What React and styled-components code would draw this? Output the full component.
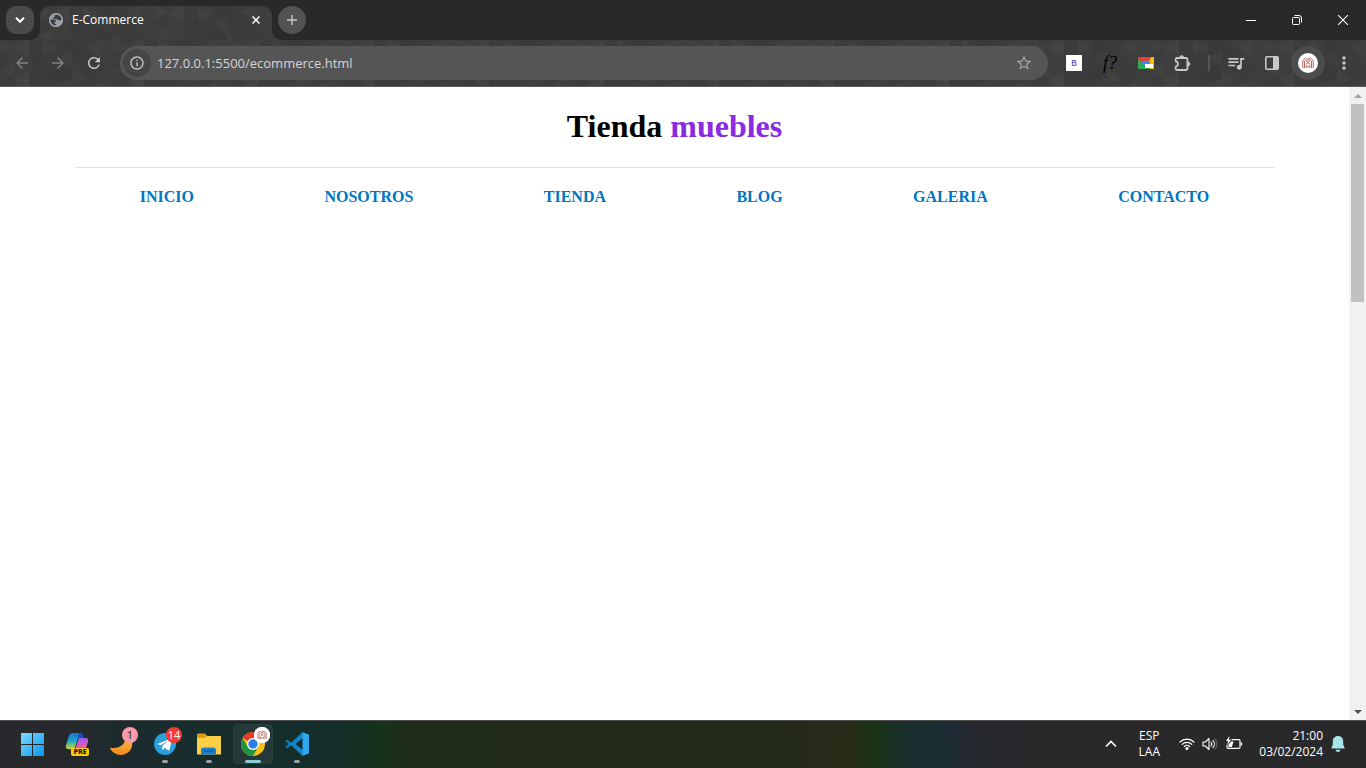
import styled, { createGlobalStyle, css } from "styled-components";
import {
    MdArrowBack,
    MdArrowForward,
    MdRefresh,
    MdStarBorder,
    MdInfoOutline,
    MdQueueMusic,
    MdMoreVert,
} from "react-icons/md";

const GlobalStyle = createGlobalStyle`
    :root {
        --strip-bg: #292929;
        --toolbar-bg: #3c3c3c;
        --pill-bg: #555555;
        --icon-color: #c7c7c7;
        --link-color: #0077c0;
        --brand-color: #8a2be2;
        --ui-font: "Open Sans", "Noto Sans", sans-serif;
    }

    *,
    *::before,
    *::after {
        box-sizing: border-box;
    }

    body {
        margin: 0;
        background-color: #ffffff;
    }

    button {
        padding: 0;
        border: none;
        background: none;
        color: inherit;
        font: inherit;
    }
`;

const Screen = styled.div`
    display: flex;
    flex-direction: column;
    min-height: 100vh;
`;

/* ---------- browser window ---------- */

const TabStrip = styled.div`
    display: flex;
    align-items: center;
    gap: 6px;
    height: 40px;
    padding-left: 6px;
    background-color: var(--strip-bg);
    color: #ffffff;
    font-family: var(--ui-font);
`;

const StripBtn = styled.button`
    display: flex;
    align-items: center;
    justify-content: center;
    width: 28px;
    height: 28px;
    border-radius: ${({ $round }) => ($round ? "50%" : "10px")};
    background-color: ${({ $round }) => ($round ? "#525252" : "#4a4a4a")};
`;

const Tab = styled.div`
    position: relative;
    display: flex;
    align-items: center;
    align-self: flex-end;
    gap: 8px;
    width: 232px;
    height: 34px;
    padding: 0 8px;
    padding-bottom: 6px;

    &::before,
    &::after {
        content: "";
        position: absolute;
        bottom: 0;
        width: 10px;
        height: 10px;
    }

    &::before {
        right: 100%;
        background: radial-gradient(circle at 0 0, transparent 10px, var(--toolbar-bg) 10px);
    }

    &::after {
        left: 100%;
        background: radial-gradient(circle at 100% 0, transparent 10px, var(--toolbar-bg) 10px);
    }
`;

const TextureSvg = styled.svg`
    position: absolute;
    inset: 0;
    width: 100%;
    height: 100%;
    border-radius: ${({ $tab }) => ($tab ? "10px 10px 0 0" : "0")};
    background-color: var(--toolbar-bg);
`;

const TabTitle = styled.span`
    position: relative;
    flex: 1;
    font-size: 12px;
    line-height: 16px;
`;

const TabIcon = styled.span`
    position: relative;
    display: flex;
`;

const TabClose = styled.button`
    position: relative;
    display: flex;
    align-items: center;
    justify-content: center;
    width: 16px;
    height: 16px;
`;

const WindowControls = styled.div`
    display: flex;
    align-self: stretch;
    margin-left: auto;
`;

const WindowBtn = styled.button`
    display: flex;
    align-items: center;
    justify-content: center;
    width: 46px;
`;

const Toolbar = styled.div`
    position: relative;
    display: flex;
    align-items: center;
    height: 47px;
    padding: 0 4px;
    border-bottom: 1px solid #5e5b5b;
    color: var(--icon-color);
    font-family: var(--ui-font);
`;

const ToolBtn = styled.button`
    position: relative;
    display: flex;
    align-items: center;
    justify-content: center;
    flex-shrink: 0;
    width: 36px;
    height: 34px;
    color: ${({ $dim }) => ($dim ? "#818181" : "inherit")};
`;

const AddressBar = styled.label`
    position: relative;
    display: flex;
    align-items: center;
    flex: 1;
    gap: 6px;
    height: 34px;
    margin: 0 8px;
    padding: 0 6px 0 3px;
    border-radius: 17px;
    background-color: var(--pill-bg);
`;

const InfoBadge = styled.span`
    display: flex;
    align-items: center;
    justify-content: center;
    width: 28px;
    height: 28px;
    border-radius: 50%;
    background-color: #464646;
`;

const AddressInput = styled.input`
    flex: 1;
    min-width: 0;
    padding: 0;
    border: none;
    outline: none;
    background: none;
    color: #d6d6d6;
    font-family: var(--ui-font);
    font-size: 13px;
    line-height: 20px;
`;

const StarBtn = styled.button`
    display: flex;
    align-items: center;
    justify-content: center;
    width: 36px;
    color: #a5a5a5;
`;

const LetterIcon = styled.span`
    width: 16px;
    height: 16px;
    background-color: #ffffff;
    color: #6a5acd;
    font-size: 9px;
    font-weight: 600;
    line-height: 16px;
    text-align: center;
`;

const FontIcon = styled.span`
    color: #000000;
    font-family: "Liberation Serif", serif;
    font-size: 18px;
    font-style: italic;
    line-height: 20px;
`;

const Divider = styled.span`
    position: relative;
    flex-shrink: 0;
    width: 2px;
    height: 16px;
    margin: 0 8px;
    background-color: #555555;
`;

const ProfileRing = styled.span`
    display: flex;
    align-items: center;
    justify-content: center;
    flex-shrink: 0;
    width: 34px;
    height: 34px;
    border-radius: 50%;
    background-color: #4c4c4c;
`;

/* ---------- web page ---------- */

const Viewport = styled.div`
    display: flex;
    flex: 1;
    background-color: #ffffff;
`;

const Page = styled.div`
    flex: 1;
    font-family: "Liberation Serif", serif;
`;

const Container = styled.div`
    width: 95%;
    max-width: 1200px;
    margin: 0 auto;
`;

const Title = styled.h1`
    margin: 0;
    padding: 21px 0 23px;
    border-bottom: 1px solid #e1e1e1;
    color: #000000;
    font-size: 32px;
    line-height: 36px;
    text-align: center;

    span {
        color: var(--brand-color);
    }
`;

const Nav = styled.nav`
    display: flex;
    justify-content: space-around;
    padding: 20px 0;
`;

const NavLink = styled.a`
    color: var(--link-color);
    font-size: 16px;
    font-weight: bold;
    line-height: 18px;
    text-decoration: none;
    text-transform: uppercase;
`;

const Scrollbar = styled.div`
    display: flex;
    flex-direction: column;
    align-items: center;
    width: 17px;
    background-color: #f1f1f1;
`;

const ScrollBtn = styled.button`
    display: flex;
    align-items: center;
    justify-content: center;
    width: 17px;
    height: 17px;
    color: ${({ $off }) => ($off ? "#a3a3a3" : "#505050")};
`;

const ScrollTrack = styled.div`
    flex: 1;
    width: 13px;
`;

const ScrollThumb = styled.div`
    height: 33%;
    background-color: #c1c1c1;
`;

/* ---------- taskbar ---------- */

const Taskbar = styled.footer`
    display: flex;
    align-items: center;
    justify-content: space-between;
    height: 48px;
    padding: 0 21px 0 11px;
    box-shadow: inset 0 1px #4c4c4c;
    background: linear-gradient(
        90deg,
        #29292c 0%,
        #28292c 4%,
        #1c2b2d 9%,
        #172d2d 14%,
        #152d2b 20%,
        #152e2a 25%,
        #163318 28%,
        #202c18 30%,
        #222b17 45%,
        #222b18 55%,
        #292a19 62%,
        #183317 64%,
        #1a302b 66%,
        #1a2e34 69%,
        #25282e 71%,
        #29292c 75%
    );
    color: #ffffff;
    font-family: var(--ui-font);
`;

const Apps = styled.div`
    display: flex;
`;

const AppBtn = styled.button`
    position: relative;
    display: flex;
    align-items: center;
    justify-content: center;
    width: 44px;
    height: 40px;

    ${({ $state }) =>
        $state &&
        css`
            &::after {
                content: "";
                position: absolute;
                bottom: 1px;
                left: 50%;
                width: ${$state === "active" ? "16px" : "6px"};
                height: 3px;
                border-radius: 2px;
                background-color: ${$state === "active" ? "#8ccdd2" : "#9aa3a3"};
                transform: translateX(-50%);
            }
        `}
`;

const ActivePlate = styled.span`
    display: flex;
    align-items: center;
    justify-content: center;
    width: 40px;
    height: 40px;
    border: 1px solid #2b403d;
    border-radius: 4px;
    background-color: #253a38;
`;

const Badge = styled.span`
    position: absolute;
    top: 3px;
    right: 5px;
    width: 16px;
    height: 16px;
    border-radius: 50%;
    background-color: ${({ $bg }) => $bg};
    color: ${({ $color }) => $color};
    font-size: 11px;
    line-height: 16px;
    text-align: center;
`;

const PreTag = styled.span`
    position: absolute;
    right: 10px;
    bottom: 8px;
    width: 18px;
    height: 8px;
    border-radius: 2px;
    background-color: #ffc90e;
    color: #1c1c1c;
    font-size: 7px;
    font-weight: 800;
    line-height: 8px;
    text-align: center;
`;

const Tray = styled.div`
    display: flex;
    align-items: center;
    font-size: 12px;
    line-height: 16px;
`;

const TrayBtn = styled.button`
    display: flex;
    align-items: center;
    justify-content: center;
    width: 32px;
    height: 40px;
`;

const Language = styled.button`
    width: 44px;
    text-align: center;
`;

const Status = styled.button`
    display: flex;
    align-items: center;
    gap: 7px;
    padding: 0 8px;
`;

const Clock = styled.time`
    margin: 0 8px;
    text-align: right;
`;

const Line = styled.span`
    display: block;
`;

const facets = [
    "0,0 14,6 0,14",
    "14,8 29,0 29,16",
    "29,20 43,12 43,30",
    "43,0 58,8 43,14",
    "58,18 72,10 72,28",
    "72,2 86,10 72,20",
    "0,30 14,22 14,38",
    "14,40 29,32 29,50",
    "43,34 58,26 58,42",
    "58,44 72,38 72,54",
    "72,30 86,38 72,46",
    "29,50 43,42 43,58",
    "86,6 101,0 101,18",
    "86,50 101,40 101,58",
    "101,20 115,28 101,36",
];

function Texture({ id, tab }) {
    return (
        <TextureSvg $tab={tab} aria-hidden="true">
            <defs>
                <pattern id={id} width="115" height="58" patternUnits="userSpaceOnUse">
                    <rect x="14" width="15" height="58" fill="#ffffff" opacity="0.01" />
                    <rect x="58" width="14" height="58" fill="#000000" opacity="0.03" />
                    <rect x="101" width="14" height="58" fill="#ffffff" opacity="0.01" />
                    {facets.map((points, i) => (
                        <polygon
                            key={points}
                            points={points}
                            fill={i % 3 === 2 ? "#000000" : "#ffffff"}
                            opacity={i % 3 === 2 ? 0.04 : 0.025}
                        />
                    ))}
                </pattern>
            </defs>
            <rect width="100%" height="100%" fill={`url(#${id})`} />
        </TextureSvg>
    );
}

function GlobeIcon() {
    return (
        <svg width="16" height="16" viewBox="0 0 16 16">
            <circle cx="8" cy="8" r="7" fill="#9aa0a6" />
            <path
                d="M2 7.500h3.500c1.600 0 2.700.9 2.700 2.300h-1.600v2c1 0 1.600.5 1.600 1.700C4.500 13.700 2 11 2 7.500zM8.500 2.300 6.600 3v1.500c0 .7-.5 1-1.300 1v1.400h3.300c1.400 0 1.700 1.600 2.700 1.600s1.200-1 2.600-1C13.700 4.500 11.500 2.500 8.500 2.300z"
                fill="#3c3c3c"
            />
            <circle cx="8" cy="8" r="6.300" fill="none" stroke="#9aa0a6" strokeWidth="1.400" />
        </svg>
    );
}

function PuzzleIcon() {
    return (
        <svg width="20" height="20" viewBox="0 0 20 20" fill="none" stroke="currentColor" strokeWidth="1.800">
            <path
                d="M4.900 5h9.300c.7 0 1.200.5 1.200 1.200v9.600c0 .7-.5 1.200-1.200 1.200H4.900c-.7 0-1.200-.5-1.200-1.200v-2.200c3-.5 3-4.700 0-5.200V6.200C3.700 5.500 4.200 5 4.900 5z"
                strokeLinejoin="round"
            />
            <path d="M7.700 4.500a2 2 0 0 1 4 0zM16 8.900a2 2 0 0 1 0 4z" fill="currentColor" strokeWidth=".6" />
        </svg>
    );
}

function MailIcon() {
    return (
        <svg width="16" height="14" viewBox="0 0 16 14">
            <rect y="1" width="16" height="12" rx="1" fill="#34a853" />
            <path d="M11 1h4.500l.5.500V13h-4z" fill="#fbbc05" />
            <path d="M.5 1H13l-2 4.500H5L2.500 6 0 3z" fill="#ea3e35" />
            <path d="m3.500 6.500 3-1.700h4.500L12 8v2H7z" fill="#4285f4" />
            <rect x="7" y="8" width="8" height="4" fill="#ffffff" />
        </svg>
    );
}

function AvatarIcon({ size }) {
    return (
        <svg width={size} height={size} viewBox="0 0 20 20">
            <circle cx="10" cy="10" r="10" fill="#ffffff" />
            <g fill="none" stroke="#b9645b" strokeWidth="1">
                <path d="M4.800 15V7.500L7.500 5 10 7.300 12.500 5l2.700 2.500V15" />
                <path d="M6.500 15V8.300l1.200-1.200L12 11.500M13.500 15V8.300l-1.200-1.200L8 11.500" />
                <path d="M8.200 15v-2.500L10 14.200l1.800-1.700V15M10 4.800l1.500 1.400" />
            </g>
        </svg>
    );
}

function WindowsIcon() {
    return (
        <svg width="24" height="24" viewBox="0 0 24 24">
            <defs>
                <linearGradient id="win" x1="0" y1="0" x2="1" y2="1">
                    <stop offset="0" stopColor="#7ddcff" />
                    <stop offset="1" stopColor="#0a94ee" />
                </linearGradient>
            </defs>
            <path d="M0 1h11v11H0zM12 1h11v11H12zM0 13h11v11H0zM12 13h11v11H12z" fill="url(#win)" />
        </svg>
    );
}

function CopilotIcon() {
    return (
        <svg width="24" height="24" viewBox="0 0 24 24">
            <defs>
                <linearGradient id="copLeft" x1="0" y1="0" x2="0" y2="1">
                    <stop offset="0" stopColor="#1f6fe0" />
                    <stop offset="0.5" stopColor="#18a7c9" />
                    <stop offset="1" stopColor="#d4d52d" />
                </linearGradient>
                <linearGradient id="copRight" x1="0" y1="0" x2="0" y2="1">
                    <stop offset="0" stopColor="#9b5cf0" />
                    <stop offset="0.6" stopColor="#ea5ca8" />
                    <stop offset="1" stopColor="#f9a35b" />
                </linearGradient>
            </defs>
            <path d="M8 1h7c2 0 2.500 1 3 3l.6 2H15c-2 0-2.500 1-3 3l-1.500 5c-.6 2-1.500 3-3.500 3H3c-2 0-2.500-2-2-4L4 4c.6-2 2-3 4-3z" fill="url(#copLeft)" />
            <path d="M15 6h6c2 0 2.500 2 2 4l-3 9c-.6 2-2 3-4 3H9c-1.500 0-2.500-1-3-3l-.6-2H8c2 0 2.600-1 3.200-3l1.600-5c.5-2 1-3 2.200-3z" fill="url(#copRight)" />
            <path d="M14 1h1c2 0 2.500 1 3 3l.6 2H15c-2 0-2 .5-2.600 2z" fill="#1a4fc0" />
        </svg>
    );
}

function MoonIcon() {
    return (
        <svg width="24" height="24" viewBox="0 0 24 24">
            <defs>
                <linearGradient id="moon" x1="0" y1="0" x2="0" y2="1">
                    <stop offset="0" stopColor="#ffc34d" />
                    <stop offset="1" stopColor="#f08a1c" />
                </linearGradient>
            </defs>
            <path d="M17 1c8 5 8 15 2 19.500C13 25 3.500 23 1 15.500c7 2 17-1 16-14.500z" fill="url(#moon)" />
        </svg>
    );
}

function TelegramIcon() {
    return (
        <svg width="24" height="24" viewBox="0 0 24 24">
            <circle cx="12" cy="12" r="11" fill="#2a9fda" />
            <path d="M4.500 12 18 6.500c.7-.2 1 .2.900.8l-2.300 10.500c-.2.8-.7.9-1.300.6l-3.500-2.600-1.700 1.700c-.5.5-.9.200-.9-.4v-3.200l6-5.400-7.400 4.700-3.200-1c-.7-.2-.7-.6-.1-.9z" fill="#ffffff" />
        </svg>
    );
}

function FolderIcon() {
    return (
        <svg width="26" height="24" viewBox="0 0 26 24">
            <path d="M1 3c0-1 .6-1.500 1.500-1.500H9L11.500 4H24c.6 0 1 .4 1 1v6H1z" fill="#e29b0d" />
            <path d="M1 6h8l2-2h13c.6 0 1 .4 1 1v17.500H1z" fill="#ffcf48" />
            <path d="M5 22.500V18c0-1.500.8-2.500 2.500-2.500h10c1.700 0 2.500 1 2.500 2.500v4.500z" fill="#1680d2" />
            <path d="M8.500 19h8" stroke="#0b5ea8" strokeWidth="1.600" strokeLinecap="round" />
        </svg>
    );
}

function ChromeIcon() {
    return (
        <svg width="24" height="24" viewBox="0 0 24 24">
            <circle cx="12" cy="12" r="12" fill="#fbc116" />
            <path d="M12 12 1.600 6A12 12 0 0 1 22.400 6H12z" fill="#e33b2e" />
            <path d="M1.600 6A12 12 0 0 0 12 24l5.200-9L12 12 6.800 15z" fill="#229342" />
            <circle cx="12" cy="12" r="6" fill="#ffffff" />
            <circle cx="12" cy="12" r="4.700" fill="#2f7de9" />
        </svg>
    );
}

function CodeIcon() {
    return (
        <svg width="24" height="24" viewBox="0 0 24 24">
            <path d="M17.500 0 6.200 10.800 2.300 7.700.4 8.700v6.600l1.900 1 3.900-3.100L17.500 24l1-5.800-8.200-6.200 8.200-6.200z" fill="#1583c7" />
            <path d="M.4 8.700 4 12 .4 15.300z" fill="#162f29" />
            <path d="M17.500 0 24 2.800v18.400L17.500 24z" fill="#2aa8f2" />
        </svg>
    );
}

function WifiIcon() {
    return (
        <svg width="16" height="14" viewBox="0 0 16 14" fill="none" stroke="#ffffff" strokeWidth="1.200" strokeLinecap="round">
            <path d="M1 5a10 10 0 0 1 14 0M3.200 7.300a6.800 6.800 0 0 1 9.600 0M5.400 9.500a3.700 3.700 0 0 1 5.200 0" />
            <circle cx="8" cy="11.500" r="1" fill="#ffffff" />
        </svg>
    );
}

function VolumeIcon() {
    return (
        <svg width="16" height="14" viewBox="0 0 16 14" fill="none" stroke="#ffffff" strokeWidth="1.100" strokeLinecap="round" strokeLinejoin="round">
            <path d="M1 5v4h2.300L7 12.500v-11L3.300 5zM9 5a3 3 0 0 1 0 4M11 3.300a5.500 5.500 0 0 1 0 7.400" />
            <path d="M13 1.800a8 8 0 0 1 0 10.400" stroke="#6b6b6d" />
        </svg>
    );
}

function BatteryIcon() {
    return (
        <svg width="18" height="16" viewBox="0 0 18 16" fill="none" stroke="#ffffff" strokeWidth="1.200">
            <path d="M6.500 3.600h7.300c.7 0 1.200.5 1.200 1.200v6.400c0 .7-.5 1.200-1.200 1.200H3.200c-.7 0-1.200-.5-1.200-1.200V9M16.500 6.500v3" />
            <path d="M3.500 11V8.500L6 5.500h2.500L6.800 11z" fill="#ffffff" stroke="none" />
            <path d="M4.500 0 1 5h2L2.200 9 6 3.800H4z" fill="#ffffff" stroke="none" />
        </svg>
    );
}

function BellIcon() {
    return (
        <svg width="14" height="16" viewBox="0 0 14 16" fill="#a9e6e8">
            <path d="M7 0C3.800 0 1.800 2.300 1.800 5.200V8.500L.4 12v.6h13.200V12l-1.400-3.500V5.200C12.200 2.300 10.200 0 7 0zM4.600 13.800h4.800C9 15.200 8.200 16 7 16s-2-.8-2.400-2.200z" />
        </svg>
    );
}

const links = ["Inicio", "Nosotros", "Tienda", "Blog", "Galeria", "Contacto"];

function Browser() {
    return (
        <>
            <TabStrip>
                <StripBtn aria-label="Search tabs">
                    <svg width="10" height="8" viewBox="0 0 10 8" fill="none" stroke="#ffffff" strokeWidth="2">
                        <path d="m1 1.800 4 4 4-4" />
                    </svg>
                </StripBtn>
                <Tab>
                    <Texture id="tabTexture" tab />
                    <TabIcon>
                        <GlobeIcon />
                    </TabIcon>
                    <TabTitle>E-Commerce</TabTitle>
                    <TabClose aria-label="Close tab">
                        <svg width="8" height="8" viewBox="0 0 8 8" stroke="#ffffff" strokeWidth="1.500">
                            <path d="m.5.500 7 7M7.500.500l-7 7" />
                        </svg>
                    </TabClose>
                </Tab>
                <StripBtn $round aria-label="New tab">
                    <svg width="10" height="10" viewBox="0 0 10 10" stroke="#c7c7c7" strokeWidth="1.400">
                        <path d="M5 0v10M0 5h10" />
                    </svg>
                </StripBtn>
                <WindowControls>
                    <WindowBtn aria-label="Minimize">
                        <svg width="10" height="10" viewBox="0 0 10 10" stroke="#ffffff">
                            <path d="M0 5.500h10" />
                        </svg>
                    </WindowBtn>
                    <WindowBtn aria-label="Restore">
                        <svg width="10" height="10" viewBox="0 0 10 10" fill="none" stroke="#ffffff">
                            <rect x=".5" y="2.500" width="7" height="7" rx="1" />
                            <path d="M2.500.500H7A2.500 2.500 0 0 1 9.500 3v4.500" />
                        </svg>
                    </WindowBtn>
                    <WindowBtn aria-label="Close">
                        <svg width="10" height="10" viewBox="0 0 10 10" stroke="#ffffff" strokeWidth="1.100">
                            <path d="m0 0 10 10M10 0 0 10" />
                        </svg>
                    </WindowBtn>
                </WindowControls>
            </TabStrip>
            <Toolbar>
                <Texture id="barTexture" />
                <ToolBtn $dim aria-label="Back">
                    <MdArrowBack size={18} />
                </ToolBtn>
                <ToolBtn $dim aria-label="Forward">
                    <MdArrowForward size={18} />
                </ToolBtn>
                <ToolBtn aria-label="Reload">
                    <MdRefresh size={18} />
                </ToolBtn>
                <AddressBar>
                    <InfoBadge>
                        <MdInfoOutline size={16} />
                    </InfoBadge>
                    <AddressInput
                        aria-label="Address"
                        defaultValue="127.0.0.1:5500/ecommerce.html"
                    />
                    <StarBtn aria-label="Bookmark">
                        <MdStarBorder size={18} />
                    </StarBtn>
                </AddressBar>
                <ToolBtn aria-label="Bootstrap">
                    <LetterIcon>B</LetterIcon>
                </ToolBtn>
                <ToolBtn aria-label="Fonts">
                    <FontIcon>f?</FontIcon>
                </ToolBtn>
                <ToolBtn aria-label="Mail">
                    <MailIcon />
                </ToolBtn>
                <ToolBtn aria-label="Extensions">
                    <PuzzleIcon />
                </ToolBtn>
                <Divider />
                <ToolBtn aria-label="Media">
                    <MdQueueMusic size={20} />
                </ToolBtn>
                <ToolBtn aria-label="Side panel">
                    <svg width="14" height="14" viewBox="0 0 14 14" fill="currentColor">
                        <rect x=".8" y=".8" width="12.400" height="12.400" rx="1" fill="none" stroke="currentColor" strokeWidth="1.600" />
                        <path d="M8 1h5v12H8z" />
                    </svg>
                </ToolBtn>
                <ToolBtn aria-label="Profile">
                    <ProfileRing>
                        <AvatarIcon size={20} />
                    </ProfileRing>
                </ToolBtn>
                <ToolBtn aria-label="Menu">
                    <MdMoreVert size={20} />
                </ToolBtn>
            </Toolbar>
        </>
    );
}

function Store() {
    return (
        <Page>
            <Container>
                <Title>
                    Tienda <span>muebles</span>
                </Title>
                <Nav>
                    {links.map((link) => (
                        <NavLink key={link} href="#">
                            {link}
                        </NavLink>
                    ))}
                </Nav>
            </Container>
        </Page>
    );
}

function App() {
    return (
        <Screen>
            <GlobalStyle />
            <Browser />
            <Viewport>
                <Store />
                <Scrollbar>
                    <ScrollBtn $off aria-label="Scroll up">
                        <svg width="8" height="4" viewBox="0 0 8 4" fill="currentColor">
                            <path d="M0 4 4 0l4 4z" />
                        </svg>
                    </ScrollBtn>
                    <ScrollTrack>
                        <ScrollThumb />
                    </ScrollTrack>
                    <ScrollBtn aria-label="Scroll down">
                        <svg width="8" height="4" viewBox="0 0 8 4" fill="currentColor">
                            <path d="M0 0h8L4 4z" />
                        </svg>
                    </ScrollBtn>
                </Scrollbar>
            </Viewport>
            <Taskbar>
                <Apps>
                    <AppBtn aria-label="Start">
                        <WindowsIcon />
                    </AppBtn>
                    <AppBtn aria-label="Copilot">
                        <CopilotIcon />
                        <PreTag>PRE</PreTag>
                    </AppBtn>
                    <AppBtn aria-label="Weather">
                        <MoonIcon />
                        <Badge $bg="#ff99a4" $color="#1b1b1b">1</Badge>
                    </AppBtn>
                    <AppBtn $state="open" aria-label="Telegram">
                        <TelegramIcon />
                        <Badge $bg="#f23c34" $color="#ffffff">14</Badge>
                    </AppBtn>
                    <AppBtn $state="open" aria-label="Files">
                        <FolderIcon />
                    </AppBtn>
                    <AppBtn $state="active" aria-label="Chrome">
                        <ActivePlate>
                            <ChromeIcon />
                        </ActivePlate>
                        <Badge $bg="#ffffff">
                            <AvatarIcon size={16} />
                        </Badge>
                    </AppBtn>
                    <AppBtn $state="open" aria-label="Code">
                        <CodeIcon />
                    </AppBtn>
                </Apps>
                <Tray>
                    <TrayBtn aria-label="Hidden icons">
                        <svg width="12" height="8" viewBox="0 0 12 8" fill="none" stroke="#ffffff" strokeWidth="1.600">
                            <path d="m1 6.500 5-5 5 5" />
                        </svg>
                    </TrayBtn>
                    <Language>
                        <Line>ESP</Line>
                        <Line>LAA</Line>
                    </Language>
                    <Status aria-label="Network, sound and battery">
                        <WifiIcon />
                        <VolumeIcon />
                        <BatteryIcon />
                    </Status>
                    <Clock dateTime="2024-02-03T21:00">
                        <Line>21:00</Line>
                        <Line>03/02/2024</Line>
                    </Clock>
                    <BellIcon />
                </Tray>
            </Taskbar>
        </Screen>
    );
}

export default App;
